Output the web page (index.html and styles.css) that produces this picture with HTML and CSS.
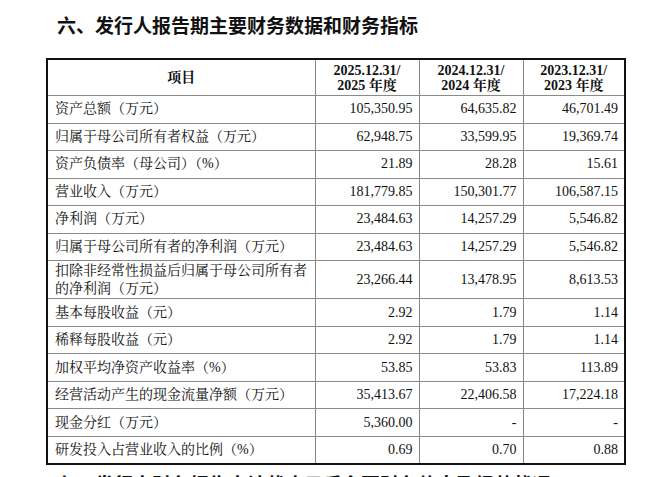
FILE: index.html
```html
<!DOCTYPE html>
<html lang="zh-CN">
<head>
<meta charset="utf-8">
<title>主要财务数据和财务指标</title>
<link rel="stylesheet" href="styles.css">
</head>
<body>
<main class="page">
  <h2 class="section-title">六、发行人报告期主要财务数据和财务指标</h2>
  <table class="fin-table">
    <colgroup>
      <col class="c-item">
      <col class="c-num">
      <col class="c-num">
      <col class="c-num-last">
    </colgroup>
    <thead>
      <tr>
        <th>项目</th>
        <th>2025.12.31/<br>2025 年度</th>
        <th>2024.12.31/<br>2024 年度</th>
        <th>2023.12.31/<br>2023 年度</th>
      </tr>
    </thead>
    <tbody>
      <tr><td>资产总额（万元）</td><td>105,350.95</td><td>64,635.82</td><td>46,701.49</td></tr>
      <tr><td>归属于母公司所有者权益（万元）</td><td>62,948.75</td><td>33,599.95</td><td>19,369.74</td></tr>
      <tr><td>资产负债率（母公司）（%）</td><td>21.89</td><td>28.28</td><td>15.61</td></tr>
      <tr><td>营业收入（万元）</td><td>181,779.85</td><td>150,301.77</td><td>106,587.15</td></tr>
      <tr><td>净利润（万元）</td><td>23,484.63</td><td>14,257.29</td><td>5,546.82</td></tr>
      <tr><td>归属于母公司所有者的净利润（万元）</td><td>23,484.63</td><td>14,257.29</td><td>5,546.82</td></tr>
      <tr class="tall"><td>扣除非经常性损益后归属于母公司所有者的净利润（万元）</td><td>23,266.44</td><td>13,478.95</td><td>8,613.53</td></tr>
      <tr><td>基本每股收益（元）</td><td>2.92</td><td>1.79</td><td>1.14</td></tr>
      <tr><td>稀释每股收益（元）</td><td>2.92</td><td>1.79</td><td>1.14</td></tr>
      <tr><td>加权平均净资产收益率（%）</td><td>53.85</td><td>53.83</td><td>113.89</td></tr>
      <tr><td>经营活动产生的现金流量净额（万元）</td><td>35,413.67</td><td>22,406.58</td><td>17,224.18</td></tr>
      <tr><td>现金分红（万元）</td><td>5,360.00</td><td>-</td><td>-</td></tr>
      <tr><td>研发投入占营业收入的比例（%）</td><td>0.69</td><td>0.70</td><td>0.88</td></tr>
    </tbody>
  </table>
  <h2 class="section-title next">七、发行人财务报告审计截止日后主要财务信息及经营状况</h2>
</main>
</body>
</html>
```
FILE: styles.css
```css
html, body {
  margin: 0;
  padding: 0;
  background: #ffffff;
}

body {
  color: #111111;
  font-family: "Liberation Serif", "Noto Serif CJK SC", "Noto Sans CJK SC", serif;
  overflow: hidden;
}

.page {
  padding-left: 46px;
  width: 578px;
}

.section-title {
  margin: 11px 0 0 0;
  padding-left: 11px;
  font-family: "Noto Sans CJK SC", sans-serif;
  font-weight: 700;
  font-size: 19px;
  line-height: 28px;
  white-space: nowrap;
  color: #111111;
}

.section-title.next {
  margin-top: 5px;
}

.fin-table {
  margin-top: 19px;
  width: 578px;
  table-layout: fixed;
  border-collapse: collapse;
  border: 2px solid #111111;
  font-size: 14px;
}

.c-item { width: 268px; }
.c-num { width: 104px; }
.c-num-last { width: 102px; }

.fin-table th,
.fin-table td {
  border: 1px solid #8a8a8a;
  padding: 0;
}

.fin-table th {
  height: 35px;
  font-weight: 700;
  font-size: 14px;
  line-height: 15px;
  text-align: center;
  vertical-align: middle;
}

.fin-table td {
  height: 26.5px;
  line-height: 18px;
  vertical-align: middle;
  text-align: right;
  padding-right: 6px;
}

.fin-table td:first-child {
  text-align: left;
  padding-left: 7px;
  padding-right: 4px;
}

.fin-table tr.tall td {
  height: 37.3px;
}

.fin-table th:first-child { border-left-color: #111111; }
.fin-table td:first-child { border-left-color: #111111; }
.fin-table th:last-child,
.fin-table td:last-child { border-right-color: #111111; }
.fin-table th { border-top-color: #111111; }
.fin-table tbody tr:last-child td { border-bottom-color: #111111; }
```
